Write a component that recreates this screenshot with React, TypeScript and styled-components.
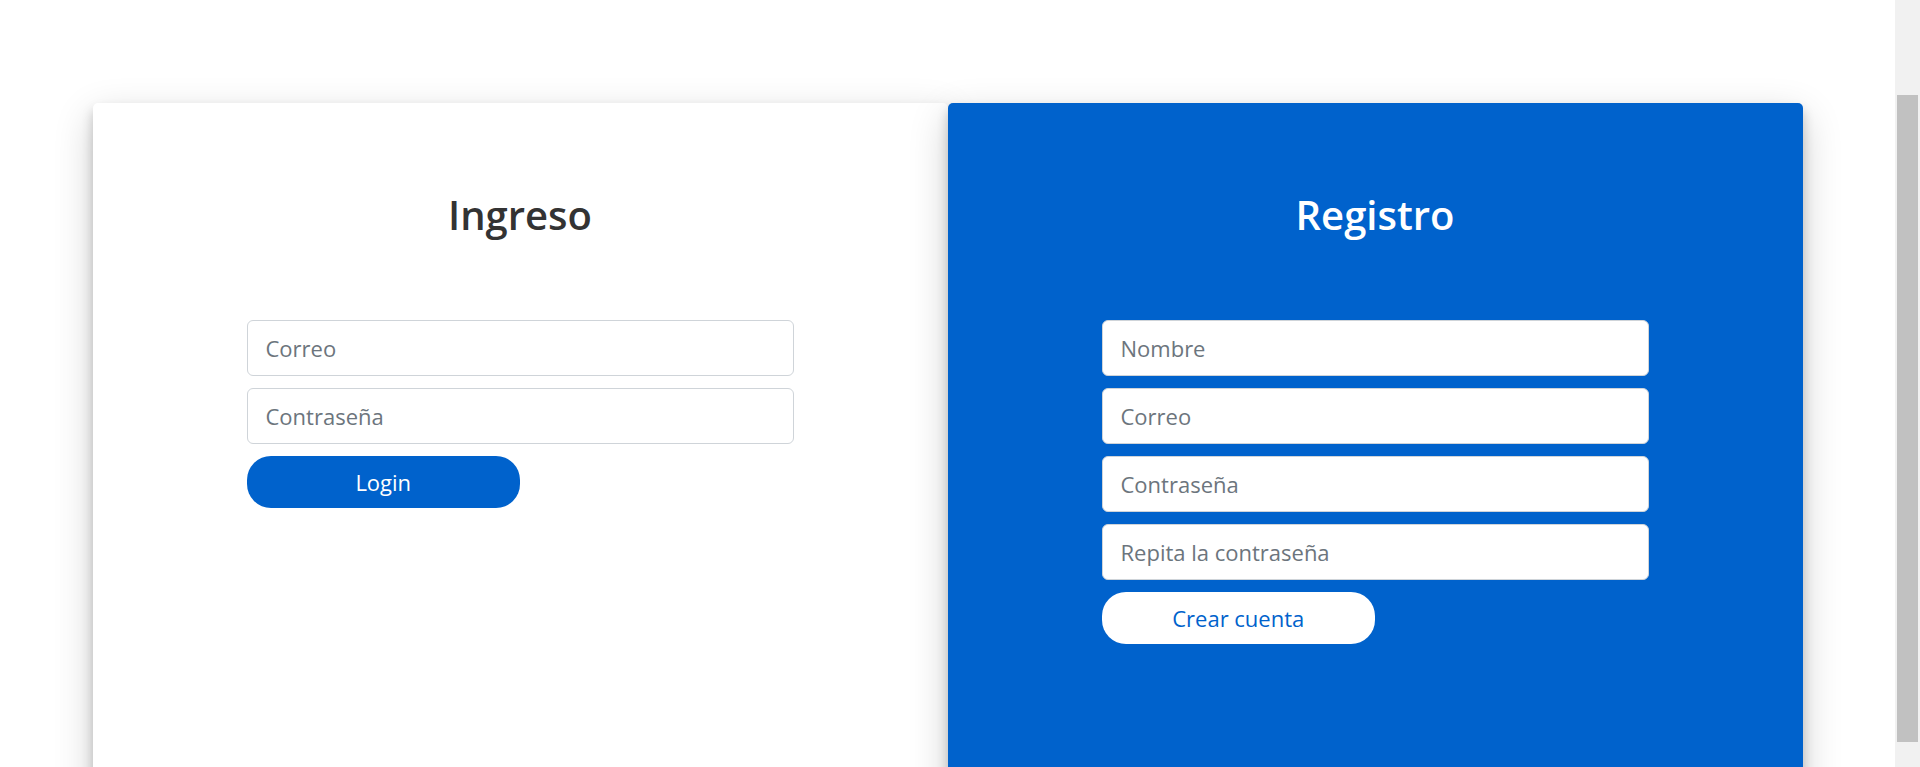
import React, { useState } from "react";
import styled, { createGlobalStyle } from "styled-components";

type Variant = "light" | "primary";

const Auth = () => {
  const [login, setLogin] = useState({ email: "", password: "" });
  const [signup, setSignup] = useState({
    name: "",
    email: "",
    password: "",
    repeat: "",
  });

  const handleLogin = (e: React.ChangeEvent<HTMLInputElement>) => {
    setLogin({ ...login, [e.target.name]: e.target.value });
  };

  const handleSignup = (e: React.ChangeEvent<HTMLInputElement>) => {
    setSignup({ ...signup, [e.target.name]: e.target.value });
  };

  return (
    <Page>
      <GlobalStyle />
      <Container>
        <Panel $variant="light">
          <Title $variant="light">Ingreso</Title>
          <Form onSubmit={(e) => e.preventDefault()}>
            <Field
              type="text"
              placeholder="Correo"
              name="email"
              value={login.email}
              onChange={handleLogin}
            />
            <Field
              type="password"
              placeholder="Contraseña"
              name="password"
              value={login.password}
              onChange={handleLogin}
            />
            <SubmitButton type="submit" $variant="light">
              Login
            </SubmitButton>
          </Form>
        </Panel>
        <Panel $variant="primary">
          <Title $variant="primary">Registro</Title>
          <Form onSubmit={(e) => e.preventDefault()}>
            <Field
              type="text"
              placeholder="Nombre"
              name="name"
              value={signup.name}
              onChange={handleSignup}
            />
            <Field
              type="text"
              placeholder="Correo"
              name="email"
              value={signup.email}
              onChange={handleSignup}
            />
            <Field
              type="password"
              placeholder="Contraseña"
              name="password"
              value={signup.password}
              onChange={handleSignup}
            />
            <Field
              type="password"
              placeholder="Repita la contraseña"
              name="repeat"
              value={signup.repeat}
              onChange={handleSignup}
            />
            <SubmitButton type="submit" $variant="primary">
              Crear cuenta
            </SubmitButton>
          </Form>
        </Panel>
      </Container>
      {/* page scrollbar as it shows in the screenshot */}
      <ScrollTrack>
        <ScrollThumb />
      </ScrollTrack>
    </Page>
  );
};

export default function App() {
  return <Auth />;
}

const GlobalStyle = createGlobalStyle`
  body {
    margin: 0;
    background: #fff;
    font-family: "Open Sans", "Noto Sans", sans-serif;
  }
  * {
    box-sizing: border-box;
  }
`;

const Page = styled.div`
  padding: 103px 25px 110px 0;
`;

const Container = styled.div`
  width: 1710px;
  margin: 0 auto;
  display: flex;
`;

const Panel = styled.div<{ $variant: Variant }>`
  flex: 1;
  padding: 86px;
  border-radius: 5px;
  background: ${(p) => (p.$variant === "primary" ? "#0062cc" : "#fff")};
  box-shadow: 0 7px 12px 0 rgba(0, 0, 0, 0.2), 0 13px 39px 0 rgba(0, 0, 0, 0.19);
`;

const Title = styled.h3<{ $variant: Variant }>`
  margin: 0 0 13px;
  padding-top: 2px;
  font-size: 40px;
  line-height: 48px;
  font-weight: 600;
  text-align: center;
  color: ${(p) => (p.$variant === "primary" ? "#fff" : "#333")};
`;

const Form = styled.form`
  padding: 68px;
  display: flex;
  flex-direction: column;
  gap: 12px;
`;

const Field = styled.input`
  width: 100%;
  height: 56px;
  padding: 0 18px;
  font-family: inherit;
  font-size: 22px;
  color: #495057;
  background: #fff;
  border: 1px solid #cfd4d9;
  border-radius: 6px;
  outline: none;

  &::placeholder {
    color: #6c757d;
  }
`;

const SubmitButton = styled.button<{ $variant: Variant }>`
  width: 50%;
  height: 52px;
  border: none;
  border-radius: 24px;
  font-family: inherit;
  font-size: 22px;
  cursor: pointer;
  color: ${(p) => (p.$variant === "primary" ? "#0062cc" : "#fff")};
  background: ${(p) => (p.$variant === "primary" ? "#fff" : "#0062cc")};
`;

const ScrollTrack = styled.div`
  position: fixed;
  top: 0;
  right: 0;
  width: 25px;
  height: 100vh;
  padding: 95px 2px 0;
  background: #f1f1f1;
`;

const ScrollThumb = styled.div`
  height: 647px;
  background: #c1c1c1;
`;
